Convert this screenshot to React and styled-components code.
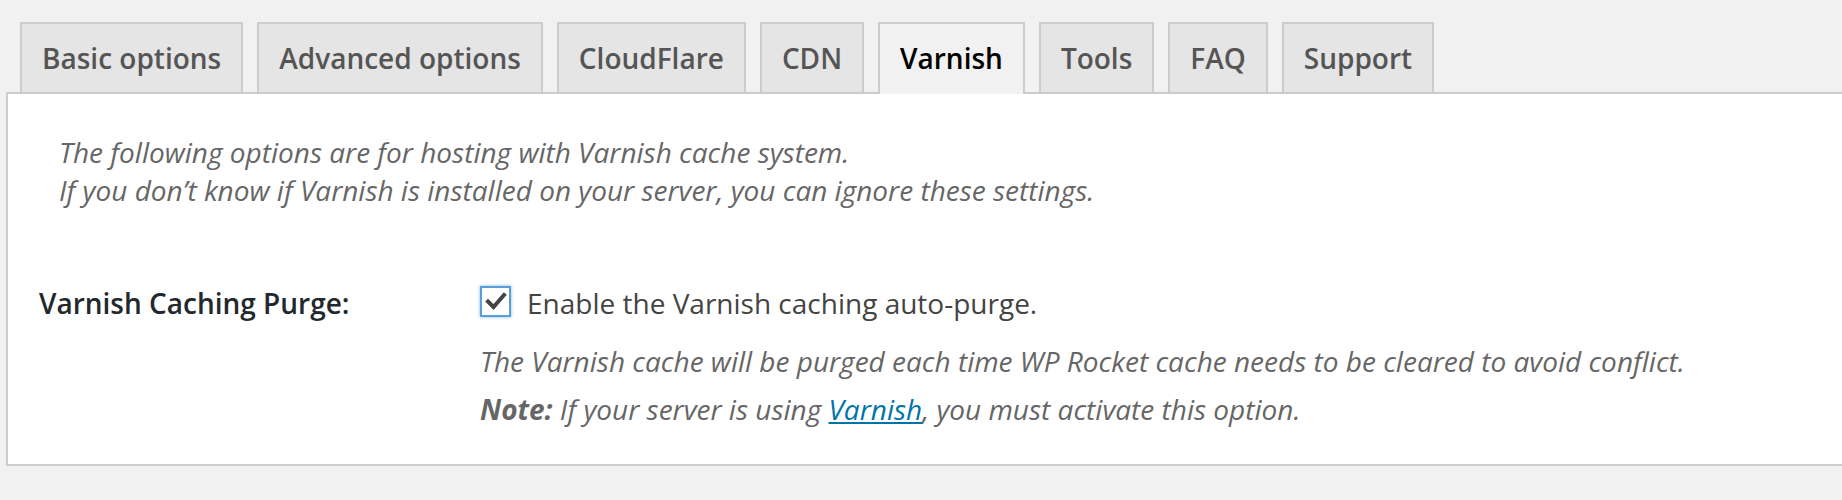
import React from "react";
import styled, { createGlobalStyle } from "styled-components";

const Global = createGlobalStyle`
  html, body { margin: 0; padding: 0; background: #f1f1f1; overflow: hidden; }
  body { font-family: "Open Sans", "Noto Sans", sans-serif; }
`;

const Page = styled.div`
  padding: 22px 0 0 6px;
  width: 1850px;
`;

const TabBar = styled.nav`
  display: flex;
  align-items: flex-end;
  gap: 14px;
  padding-left: 14px;
  position: relative;
  z-index: 1;
`;

const Tab = styled.a`
  display: block;
  box-sizing: border-box;
  height: ${(p) => (p.$active ? "72px" : "70px")};
  margin-bottom: ${(p) => (p.$active ? "-2px" : "0")};
  padding: 10px 20px;
  border: 2px solid #ccc;
  border-bottom: none;
  background: ${(p) => (p.$active ? "#f1f1f1" : "#e5e5e5")};
  color: ${(p) => (p.$active ? "#000" : "#555")};
  font-size: 28px;
  line-height: 48px;
  font-weight: 600;
  text-decoration: none;
  white-space: nowrap;
`;

const Panel = styled.section`
  box-sizing: border-box;
  background: #fff;
  border: 2px solid #ccc;
  height: 374px;
  padding: 39px 0 0 31px;
  box-shadow: 0 1px 1px rgba(0, 0, 0, 0.04);
`;

const Intro = styled.div`
  padding-left: 20px;
  color: #666;
  font-size: 28px;
  line-height: 38px;
  font-style: italic;
`;

const Row = styled.div`
  display: grid;
  grid-template-columns: 441px 1fr;
  margin-top: 75px;
`;

const Label = styled.label`
  color: #23282d;
  font-size: 28px;
  font-weight: 600;
  line-height: 38px;
`;

const Field = styled.div`
  display: flex;
  flex-direction: column;
`;

const CheckLine = styled.div`
  display: flex;
  align-items: center;
  gap: 16px;
  color: #444;
  font-size: 28px;
  line-height: 38px;
`;

const Box = styled.span`
  box-sizing: border-box;
  width: 31px;
  height: 31px;
  margin-top: -4px;
  border: 2px solid #5b9dd9;
  box-shadow: 0 0 3px rgba(30, 140, 190, 0.6);
  background: #fff;
  display: flex;
  align-items: center;
  justify-content: center;
`;

const Desc = styled.p`
  margin: ${(p) => (p.$first ? "20px" : "10px")} 0 0;
  color: #666;
  font-size: 28px;
  line-height: 38px;
  font-style: italic;
`;

const Link = styled.a`
  color: #0073aa;
  text-decoration: underline;
`;

const tabs = [
  "Basic options",
  "Advanced options",
  "CloudFlare",
  "CDN",
  "Varnish",
  "Tools",
  "FAQ",
  "Support",
];

export default function App() {
  return (
    <Page>
      <Global />
      <TabBar>
        {tabs.map((t) => (
          <Tab key={t} href="#" $active={t === "Varnish"}>
            {t}
          </Tab>
        ))}
      </TabBar>
      <Panel>
        <Intro>
          The following options are for hosting with Varnish cache system.
          <br />
          If you don’t know if Varnish is installed on your server, you can ignore these settings.
        </Intro>
        <Row>
          <Label>Varnish Caching Purge:</Label>
          <Field>
            <CheckLine>
              <Box>
                <svg width="22" height="18" viewBox="0 0 22 18">
                  <path d="M3 9.5 L8.5 15 L19 3" fill="none" stroke="#444" strokeWidth="4" strokeLinecap="square" />
                </svg>
              </Box>
              Enable the Varnish caching auto-purge.
            </CheckLine>
            <Desc $first>
              The Varnish cache will be purged each time WP Rocket cache needs to be cleared to avoid conflict.
            </Desc>
            <Desc>
              <b>Note:</b> If your server is using <Link href="#">Varnish</Link>, you must activate this option.
            </Desc>
          </Field>
        </Row>
      </Panel>
    </Page>
  );
}
